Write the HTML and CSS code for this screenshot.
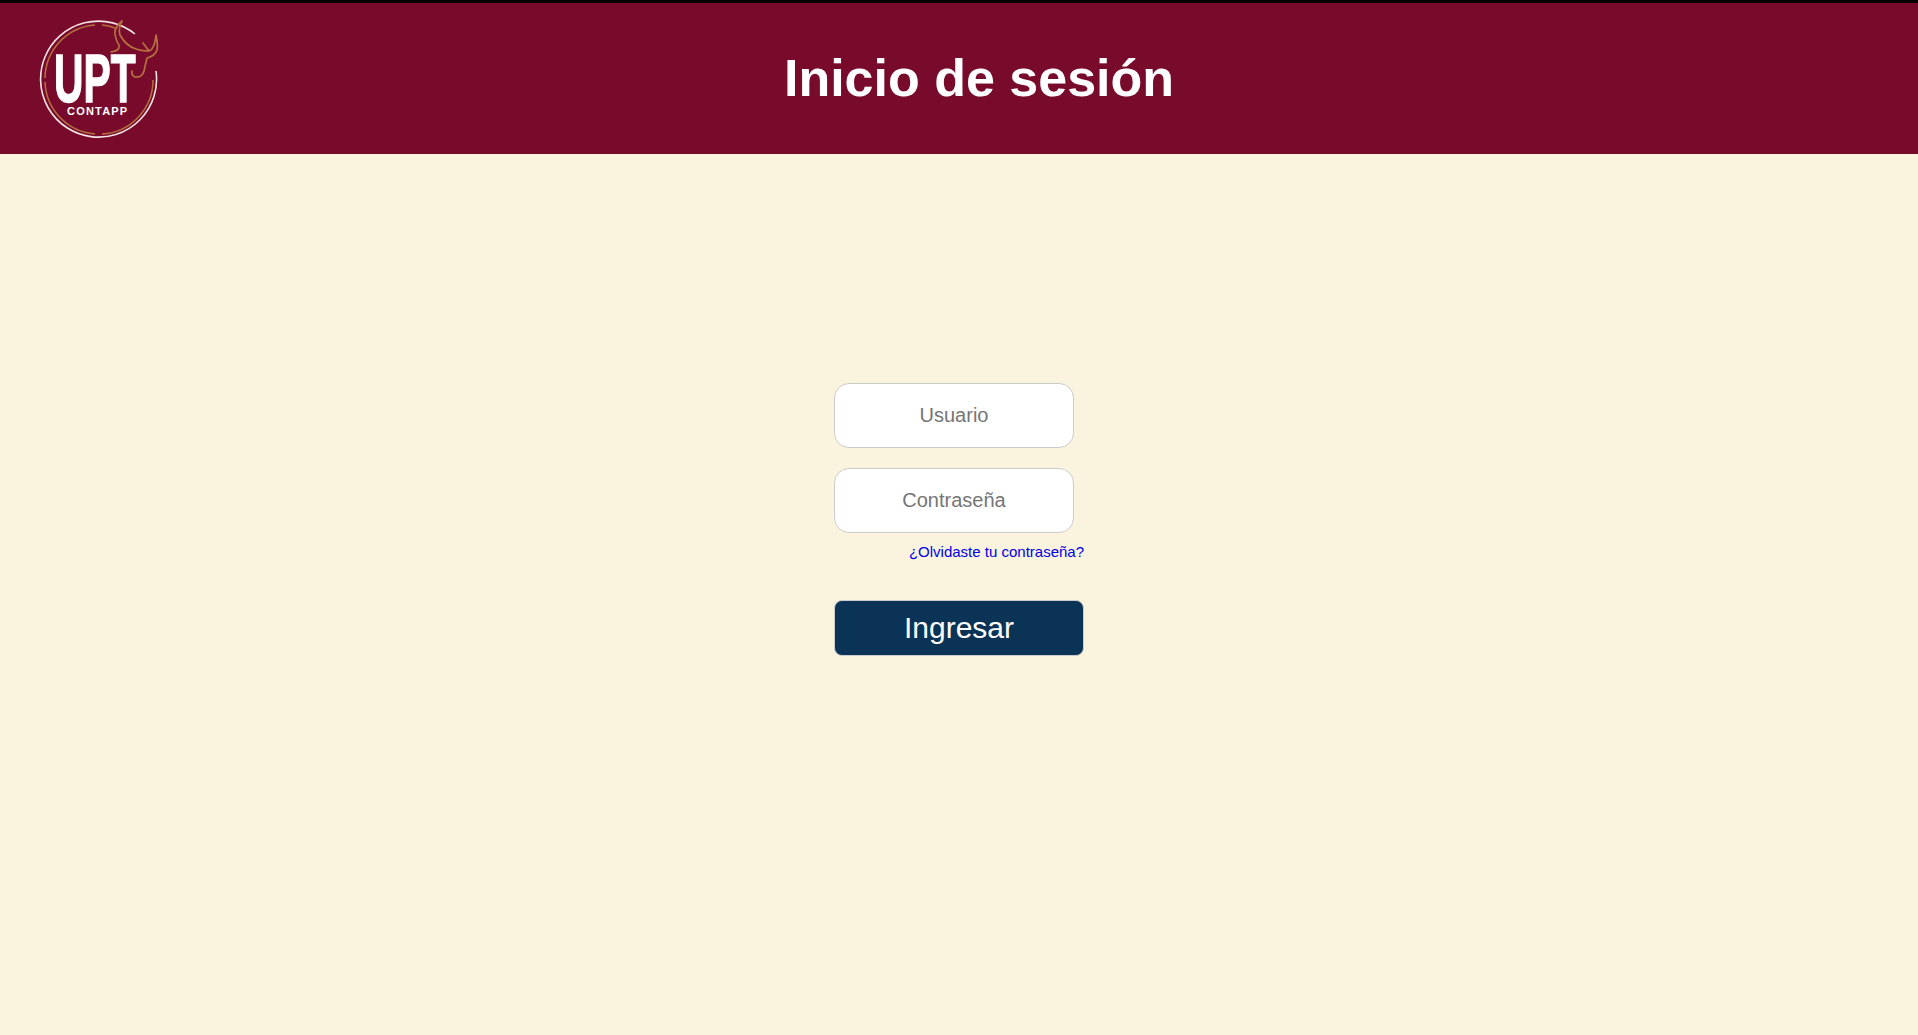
FILE: index.html
```html
<!DOCTYPE html>
<html lang="es">
<head>
<meta charset="utf-8">
<title>Inicio de sesión</title>
<link rel="stylesheet" href="styles.css">
</head>
<body>
<header class="header">
  <div class="logo">
    <svg class="logo-art" viewBox="0 0 120 120" width="120" height="120" aria-hidden="true">
      <path class="ring-w" d="M96 14 A58 58 0 1 0 117 51"/>
      <path class="ring-g" d="M56 5 A54 54 0 0 0 6 58"/>
      <path class="ring-g" d="M63 5 Q70 5.500 76 8"/>
      <path class="ring-g" d="M6 62 A54 54 0 0 0 56 114"/>
      <path class="ring-g" d="M63 114 A54 54 0 0 0 114 60"/>
      <path class="bull" d="M83 1 Q75 8 76 14 Q77 21 80 25 Q81 31 72 32 M83 1 Q79 8 81 15 Q87 26 97 29 Q106 32 112 30 Q116 26 117 15 Q119 24 118 30 Q116 36 108 38 Q106 46 105 51 Q103 58 96 57 Q92 55 93 51 M104 23 L110 31"/>
    </svg>
    <span class="upt">UPT</span>
    <span class="contapp">CONTAPP</span>
  </div>
  <h1 class="title">Inicio de sesión</h1>
</header>
<main class="main">
  <form class="form">
    <input class="field" type="text" placeholder="Usuario">
    <input class="field" type="password" placeholder="Contraseña">
    <a class="forgot" href="#">¿Olvidaste tu contraseña?</a>
    <button class="submit" type="button">Ingresar</button>
  </form>
</main>
</body>
</html>
```
FILE: styles.css
```css
* { box-sizing: border-box; }
html, body { height: 100%; }
body {
  margin: 0;
  background: #faf3dd;
  font-family: "Liberation Sans", Arial, sans-serif;
  display: flex;
  flex-direction: column;
  overflow: hidden;
}
.header {
  position: relative;
  height: 154px;
  flex: none;
  border-top: 3px solid #000;
  background: #780a2c;
  padding-left: 40px;
  display: flex;
  align-items: center;
  justify-content: center;
}
.logo { position: absolute; left: 39px; top: 17px; width: 120px; height: 120px; }
.logo-art { display: block; }
.ring-w { fill: none; stroke: #f3e4e4; stroke-width: 1.6; }
.ring-g { fill: none; stroke: #b5713f; stroke-width: 1.5; }
.bull { fill: none; stroke: #b5713f; stroke-width: 1.7; stroke-linecap: round; stroke-linejoin: round; }
.upt {
  position: absolute;
  left: 15px;
  top: 35px;
  font-weight: 700;
  font-size: 68px;
  line-height: 47px;
  color: #fff;
  -webkit-text-stroke: 1.500px #fff;
  transform: scaleX(.6);
  transform-origin: left center;
}
.contapp {
  position: absolute;
  left: 28px;
  top: 87px;
  font-size: 11px;
  font-weight: 700;
  line-height: 8px;
  letter-spacing: 1.200px;
  color: #fff;
}
.title {
  margin: 0;
  padding-bottom: 2px;
  flex: 1;
  text-align: center;
  color: #fff;
  font-size: 52px;
  font-weight: 700;
  line-height: 1;
}
.main {
  flex: 1;
  display: flex;
  justify-content: center;
  padding-top: 229px;
}
.form { width: 250px; display: flex; flex-direction: column; align-items: flex-start; }
.field {
  width: 240px;
  height: 65px;
  margin-bottom: 20px;
  border: 1px solid #ccc;
  border-radius: 15px;
  background: #fff;
  text-align: center;
  font: 20px "Liberation Sans", Arial, sans-serif;
  outline: none;
}
.field::placeholder { color: #757575; opacity: 1; }
.forgot {
  align-self: flex-end;
  margin-top: -10px;
  color: #00e;
  font-size: 15px;
  line-height: 18px;
  text-decoration: none;
}
.submit {
  width: 250px;
  height: 56px;
  margin-top: 39px;
  border: 1px solid #ccc;
  border-radius: 8px;
  background: #0a3355;
  color: #fff;
  font: 30px "Liberation Sans", Arial, sans-serif;
  padding: 0;
}
```
